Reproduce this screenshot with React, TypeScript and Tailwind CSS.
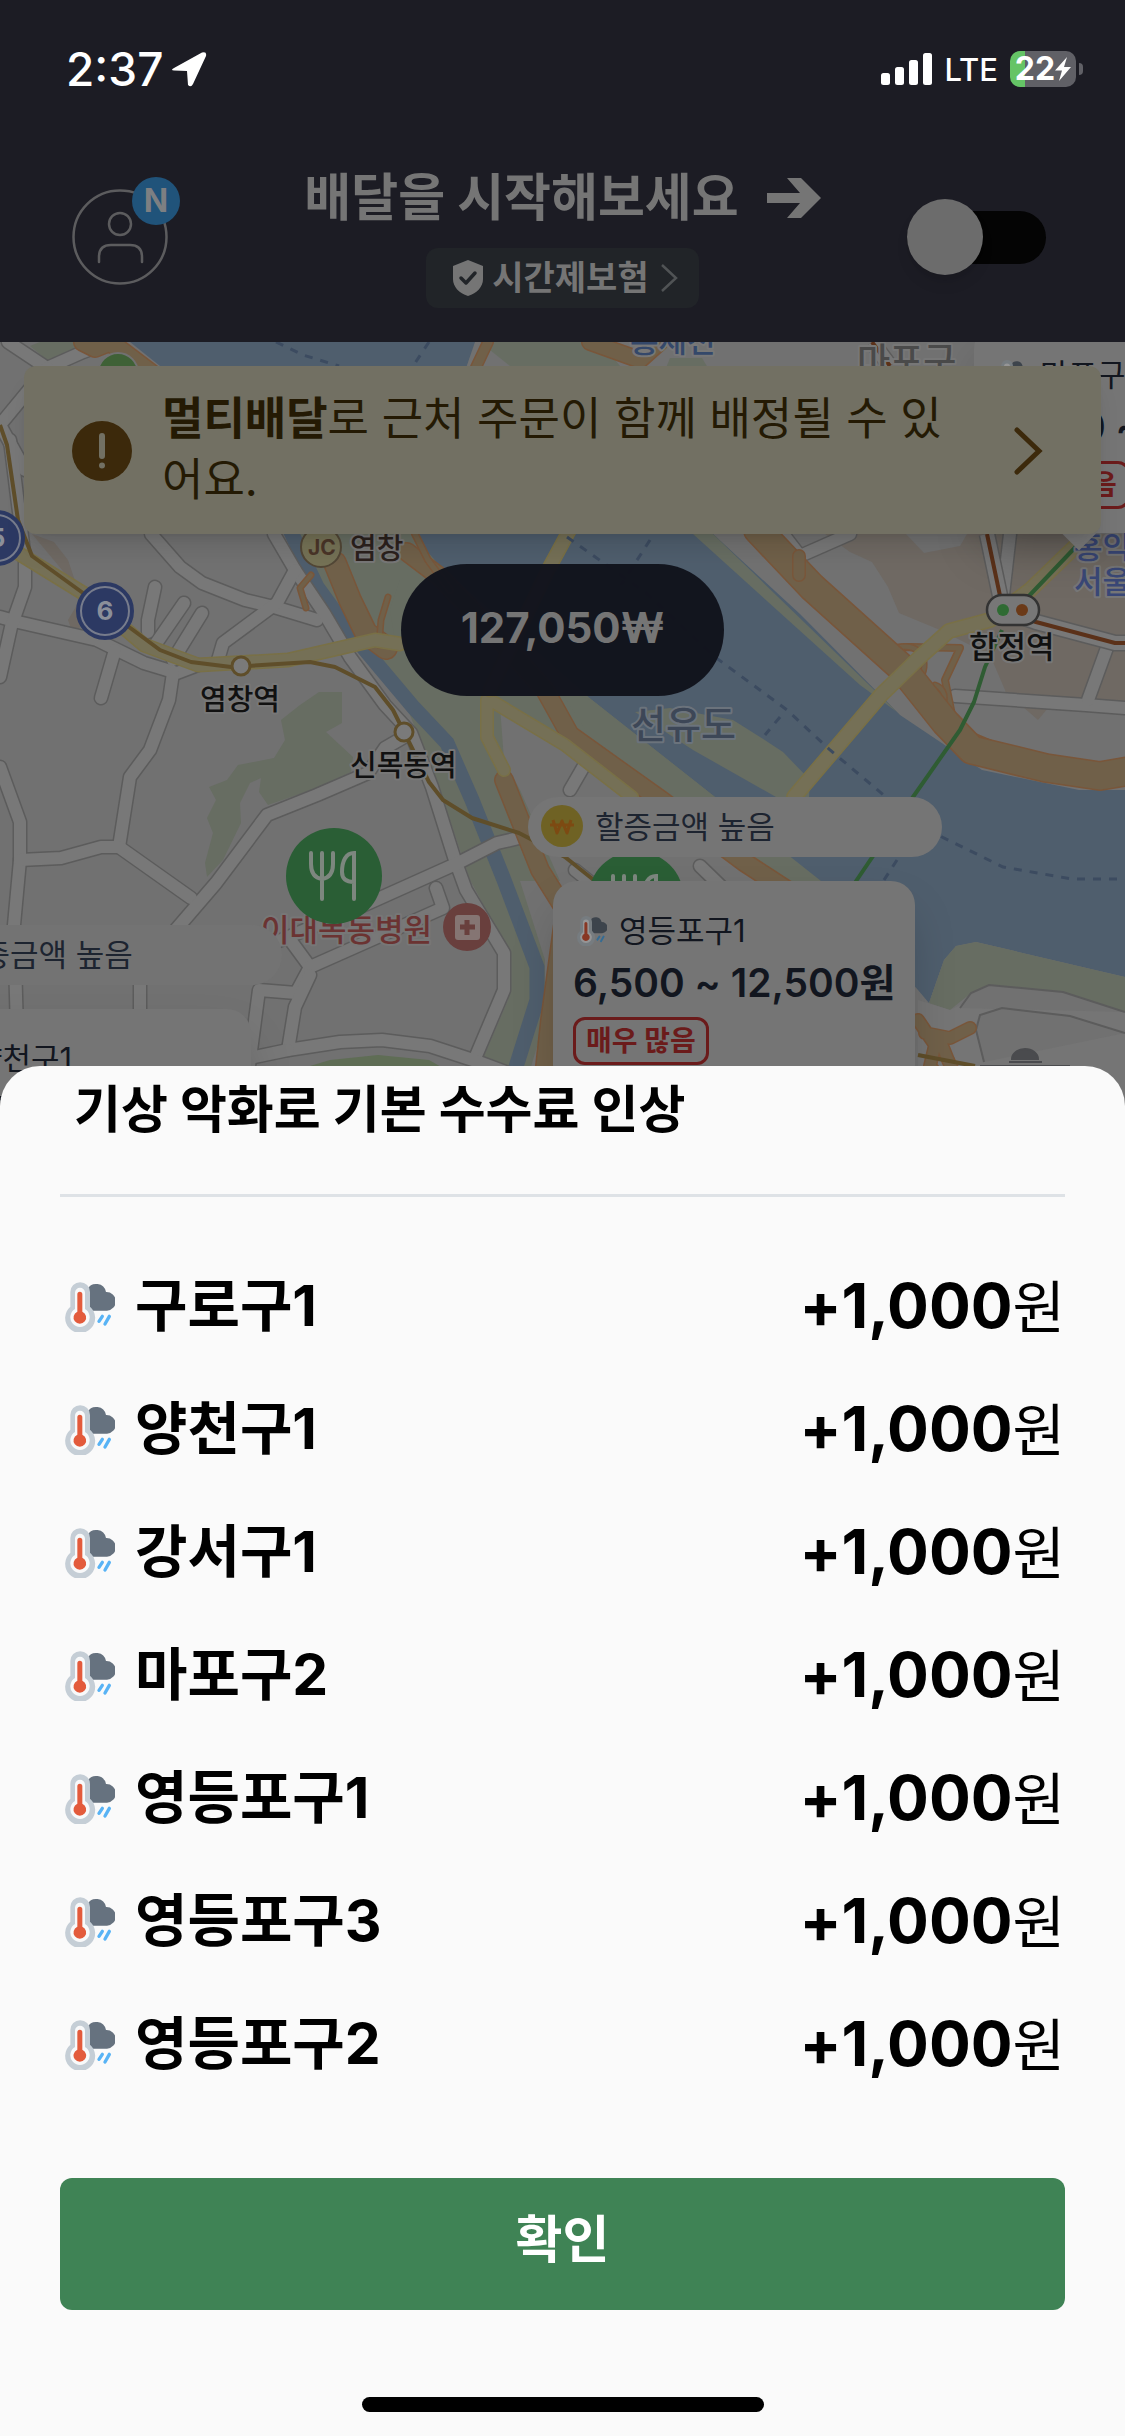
import { useState } from "react";

const SURGE_AREAS = [
  { name: "구로구1", bonus: "+1,000" },
  { name: "양천구1", bonus: "+1,000" },
  { name: "강서구1", bonus: "+1,000" },
  { name: "마포구2", bonus: "+1,000" },
  { name: "영등포구1", bonus: "+1,000" },
  { name: "영등포구3", bonus: "+1,000" },
  { name: "영등포구2", bonus: "+1,000" },
];

// ─── Icons ────────────────────────────────────────────────────────────────────

function WeatherIcon({ className }: { className: string }) {
  return (
    <svg className={className} viewBox="45 36 150 150" fill="none">
      <path
        d="M112 58a30 30 0 0 1 56 8a28 28 0 0 1 3 56h-59z"
        fill="#66727f"
      />
      <path
        d="M61 66a29 29 0 0 1 59 0v44a45 45 0 1 1-59 0z"
        fill="#c5ced6"
      />
      <path d="M75 68a15 15 0 0 1 30 0v49a29 29 0 1 1-30 0z" fill="#f8f9fa" />
      <path
        d="M82 73a7.500 7.500 0 0 1 15 0v52a19 19 0 1 1-15 0z"
        fill="#e35b3c"
      />
      <path
        d="M157 139l-10 15M178 139l-13 23"
        stroke="#58b3f5"
        strokeWidth="10"
        strokeLinecap="round"
      />
    </svg>
  );
}

function ForkKnife() {
  return (
    <g fill="none" stroke="#7d877f" strokeWidth="4" strokeLinecap="round">
      <path d="M-22 -23v11c0 9 4 14 11 15c7 -1 11 -6 11 -15v-11M-11 -23v46" />
      <path d="M21 23v-46c-8 0 -12 8 -12 19c0 7 4 10 12 10" />
    </g>
  );
}

// ─── Status bar ───────────────────────────────────────────────────────────────

function StatusBar() {
  return (
    <div className="flex h-[138px] items-center justify-between pr-[42px] pl-[66px] text-white">
      <div className="flex items-center gap-2">
        <span className="text-[46px] leading-none font-medium">2:37</span>
        <svg className="h-9 w-9" viewBox="0 0 36 36" fill="#fff">
          <path d="M3 17 L31 1.500 Q36 0 35 5 L22 33 Q20 37 17 34 L16 20 L3 19.500 Q-1 19 3 17z" />
        </svg>
      </div>
      <div className="flex items-center gap-3">
        <svg className="h-8 w-[51px]" viewBox="0 0 51 32" fill="#fff">
          <rect x="0" y="20" width="9" height="12" rx="2.500" />
          <rect x="14" y="14" width="9" height="18" rx="2.500" />
          <rect x="28" y="7" width="9" height="25" rx="2.500" />
          <rect x="42" y="0" width="9" height="32" rx="2.500" />
        </svg>
        <span className="text-[31px] leading-none font-medium">LTE</span>
        <div className="flex items-center gap-[3px]">
          <div className="flex h-9 w-[66px] items-center justify-center rounded-[10px] bg-linear-to-r from-[#65c466] from-23% to-[#606066] to-23%">
            <span className="text-[32px] leading-none font-bold">22</span>
            <svg className="h-6 w-4" viewBox="0 0 16 24" fill="#fff">
              <path d="M12 0L0 13.500h7L4 24L16 10H9z" />
            </svg>
          </div>
          <div className="h-3 w-1 rounded-r-full bg-[#606066]" />
        </div>
      </div>
    </div>
  );
}

// ─── Header ───────────────────────────────────────────────────────────────────

function Header() {
  const [online, setOnline] = useState(false);

  return (
    <header className="grid grid-cols-[1fr_auto_1fr] items-center px-[72px] pt-7 pb-[34px]">
      <button className="relative w-24" aria-label="프로필">
        <svg
          className="h-24 w-24"
          viewBox="0 0 96 96"
          fill="none"
          stroke="#5c5c5e"
          strokeWidth="2.500"
          strokeLinecap="round"
        >
          <circle cx="48" cy="48" r="46.500" />
          <circle cx="48" cy="35" r="11" />
          <path d="M27 73v-5q0 -12 12 -12h19q12 0 12 12v5" />
        </svg>
        <span className="absolute -top-3 -right-3 flex h-12 w-12 items-center justify-center rounded-full bg-[#20537a] text-[32px] leading-none font-bold text-[#7d7f82]">
          N
        </span>
      </button>

      <div className="flex flex-col items-center gap-[18px]">
        <div className="flex items-center gap-7">
          <h1 className="text-[51px] leading-[64px] font-bold">
            배달을 시작해보세요
          </h1>
          <svg className="h-10 w-[54px]" viewBox="0 0 54 40" fill="#757575">
            <path d="M0 15h33L20 0h14l20 20l-20 20H20l13 -15H0z" />
          </svg>
        </div>
        <button className="flex h-15 items-center gap-2 rounded-xl bg-[#212428] px-[18px]">
          <svg className="ml-2 h-9 w-8" viewBox="0 0 32 36" fill="none">
            <path
              d="M16 0l15 6v13c0 8 -6 14 -15 17c-9 -3 -15 -9 -15 -17V6z"
              fill="#757575"
            />
            <path
              d="M9 18l5 5l9 -10"
              stroke="#212428"
              strokeWidth="3.500"
              strokeLinecap="round"
              strokeLinejoin="round"
            />
          </svg>
          <span className="text-[34px] leading-none font-bold">시간제보험</span>
          <svg
            className="h-7 w-6"
            viewBox="0 0 24 28"
            fill="none"
            stroke="#505355"
            strokeWidth="2.500"
          >
            <path d="M5 1l14 13l-14 13" />
          </svg>
        </button>
      </div>

      <label className="flex w-[146px] items-center justify-self-end pr-[7px]">
        <input
          type="checkbox"
          className="peer sr-only"
          aria-label="배달 시작"
          checked={online}
          onChange={(e) => setOnline(e.target.checked)}
        />
        <span className="flex h-[53px] w-full items-center rounded-full bg-[#040404] peer-checked:justify-end">
          <span className="h-19 w-19 rounded-full bg-[#6c6c6c] shadow-lg" />
        </span>
      </label>
    </header>
  );
}

// ─── Map ──────────────────────────────────────────────────────────────────────

const STREETS = [
  "M0 617L18 622L97 640L144 663L177 673L198 665",
  "M8 342L47 368L83 352L110 342",
  "M47 368L0 425L25 470",
  "M10 440L25 560V587L11 627L0 677",
  "M151 534L180 567L202 583L245 600L274 607L317 620",
  "M274 534L295 570L324 613L350 657L385 705L411 733L432 787L454 857L466 890L504 953V990L476 1056",
  "M295 570L277 603L223 643L218 660",
  "M155 587L148 620V632",
  "M184 603L155 645",
  "M202 613L173 660",
  "M173 673L169 700L150 750L130 777L119 847",
  "M115 650L101 698",
  "M0 767L20 822V860L14 925L18 1066",
  "M20 860L61 858L101 847L119 847L191 898",
  "M167 940L216 883L267 815L317 795L368 773L385 748L404 737",
  "M519 838L497 843L458 863L360 907L274 943",
  "M288 937L310 967L296 993L259 990L249 1066",
  "M310 967L443 908L436 888",
  "M310 975L295 1007L288 1050L340 1042L382 1040L430 1046L479 1062L540 1085",
  "M288 1050L230 1062",
  "M140 985V1066",
  "M1010 534L1003 595",
  "M783 534L800 556L850 534",
  "M955 696L1086 705L1125 708",
  "M1108 645L1088 700",
  "M570 790L592 752",
  "M575 870L600 890",
  "M700 866L735 900",
];

function Streets({ paths }: { paths: string[] }) {
  return (
    <g fill="none" strokeLinejoin="round" strokeLinecap="round">
      {paths.map((d) => (
        <path key={d} d={d} stroke="#5c5c5c" strokeWidth="15" />
      ))}
      {paths.map((d) => (
        <path key={d} d={d} stroke="#787878" strokeWidth="12" />
      ))}
    </g>
  );
}

function Road({ d, width, kind }: { d: string; width: number; kind: string }) {
  const [edge, fill] =
    kind === "highway" ? ["#79563a", "#706049"] : ["#797046", "#757056"];
  return (
    <g fill="none" strokeLinejoin="round" strokeLinecap="round">
      <path d={d} stroke={edge} strokeWidth={width} />
      <path d={d} stroke={fill} strokeWidth={width - 3} />
    </g>
  );
}

function MapCanvas() {
  return (
    <svg
      className="absolute inset-0 h-full w-full"
      viewBox="0 342 1125 764"
      preserveAspectRatio="xMidYMin slice"
    >
      <rect x="-600" y="342" width="2400" height="900" fill="#717171" />

      {/* built-up areas */}
      <g fill="#6f6963">
        <path d="M825 534L850 552L872 562L888 587L899 613L940 630L990 655L1005 690L1010 706H1125V534z" />
        <path d="M32 534L54 542L68 560L77 587L90 600L75 640L68 620L83 595z" />
        <path d="M1022 706L1038 720L1048 708z" />
      </g>
      <path d="M906 534L924 553L960 546L967 534z" fill="#717171" />

      {/* green banks */}
      <g fill="#676d62">
        <path d="M285 534L420 534L460 580L610 700L740 800L840 881H520L545 960V1020L530 1070H478L508 1000V950L470 880L440 790L404 700L330 600z" />
        <path d="M281 720L300 705L319 692L342 692V723L326 732L353 757L351 772L317 788L268 805L259 792L261 778L250 783L240 803L241 823L223 860L207 877L205 863L213 833L207 818L216 800L209 787L227 780L238 765L274 758L285 740z" />
        <path d="M480 342H600L620 366H510z" />
        <path d="M40 342H90L70 352L47 360L30 346z" />
        <path d="M670 358L702 358L708 368H666z" />
        <path d="M690 534L713 534L905 720L880 705z" />
      </g>

      {/* city blocks between the highways */}
      <path d="M500 706L560 748L632 797L783 881H560L520 790L504 760z" fill="#717171" />
      <path d="M400 580L425 565L450 590L470 640L395 640L390 610z" fill="#676d62" />

      {/* river */}
      <g fill="#4f5e6d">
        <path d="M130 342H475L455 400L713 534L800 614L900 715L982 770L1079 790H1125V977L976 942L956 946L944 960L937 980L929 1003L918 990L821 881L715 797L592 700L440 566L412 534L240 430z" />
      </g>
      <g fill="none" stroke="#4f5e6d" strokeWidth="15">
        <path d="M290 530L317 587L346 627L382 670L414 708L447 743L472 800L504 880L537 967L537 1000L515 1070" />
      </g>
      <g fill="#676d62">
        <path d="M693 534L713 534L897 712L860 685z" />
        <path d="M635 712L670 708L733 720L760 737L783 752L810 780L809 797H776L693 750z" />
        <path d="M929 1003L937 980L944 960L956 946L976 942L1125 977V1012L1063 992L989 985L971 993L950 1010z" />
        <path d="M290 1072L330 1060L378 1055L429 1060L450 1072z" fill="#5f6d55" />
        <path d="M560 690L592 700L715 797H673L590 737z" />
      </g>

      {/* park across the east bank */}
      <path
        d="M918 1000L950 1010L971 1000L989 985L1063 992L1125 1012V1106H918z"
        fill="#757575"
      />
      <path
        d="M984 1062L976 1030L980 1015L1002 1008L1070 1016L1125 1033M960 1008L971 993L989 985L1063 992L1125 1012"
        fill="#717171"
        stroke="#5c5c5c"
        strokeWidth="2"
      />

      <Streets paths={STREETS} />

      {/* highways */}
      <Road kind="highway" width={20} d="M83 342L95 348L110 342L160 380" />
      <Road kind="highway" width={12} d="M488 342L470 380" />
      <Road kind="highway" width={18} d="M590 342L640 360L660 342" />
      <Road kind="highway" width={24} d="M335 563L350 600L366 633L386 648" />
      <Road kind="highway" width={7} d="M311 575L300 588L306 608" />
      <Road kind="highway" width={7} d="M388 597L381 620L379 645" />
      <Road kind="highway" width={20} d="M407 552L440 577L500 640L545 690L570 735L661 800L744 862L790 892" />
      <Road kind="highway" width={8} d="M415 534L428 560L450 590" />
      <Road kind="highway" width={20} d="M504 780L540 870L565 910L550 1020L545 1066" />
      <Road kind="highway" width={8} d="M875 649L910 647L960 648L945 680L952 715L970 735L1010 752" />
      <Road kind="highway" width={7} d="M890 650C915 640 930 655 922 675S900 690 895 668" />
      <Road kind="highway" width={7} d="M935 685C950 690 945 712 935 702" />
      <Road kind="highway" width={30} d="M758 530L812 587L862 632L902 668L945 722L972 750L1046 768L1100 776L1135 770" />
      <Road kind="highway" width={14} d="M918 1020L935 1045L930 1066L950 1090M925 1033L950 1038L970 1028M940 1040L948 1060L955 1075L970 1090M799 556V575" />

      {/* main roads */}
      <Road kind="main" width={15} d="M18 553L83 593L144 645L198 665L288 660L375 640L400 644" />
      <Road kind="main" width={14} d="M504 770L487 737V700L495 703L565 745L632 797" />
      <Road kind="main" width={15} d="M575 520L548 570L490 690" />
      <Road kind="main" width={16} d="M794 797L881 695L920 657L949 631L990 620L1030 590L1086 536" />

      {/* ferry routes */}
      <g fill="none" stroke="#3c4b60" strokeWidth="3" strokeDasharray="8 8">
        <path d="M567 537L646 593L715 657L787 710L830 750L886 797L942 837L1003 867L1072 879H1125" />
        <path d="M650 540L621 585M276 342L303 355L339 366M429 342L413 366M780 717L765 735M897 860L884 880" />
      </g>

      {/* subway lines */}
      <g fill="none" strokeWidth="4" strokeLinejoin="round">
        <path
          d="M0 425L7 445L18 520L32 556L83 593L133 630L160 650L191 662L231 667L310 662L335 667L375 687L393 710L404 732L429 782L443 800L472 818L519 833L565 857L600 885M918 1055L975 1066"
          stroke="#5f4e2a"
        />
        <path d="M1086 536L1028 597M1002 630L985 667L974 702L960 730L913 797L850 890" stroke="#2f5c33" />
      </g>
      <g fill="none" strokeLinejoin="round">
        <path d="M987 534L1003 610L1036 622L1115 643H1135M872 342L890 366" stroke="#5c5c5c" strokeWidth="17" />
        <path d="M987 534L1003 610L1036 622L1115 643H1135M872 342L890 366" stroke="#787878" strokeWidth="14" />
        <path d="M987 534L1003 610L1036 622L1115 643H1135M872 342L890 366" stroke="#5b3119" strokeWidth="4" />
      </g>

      {/* stations and route badges */}
      <g fill="#7a7a7a" stroke="#5f4e2a" strokeWidth="3">
        <circle cx="241" cy="666" r="9" />
        <circle cx="404" cy="732" r="9" />
      </g>
      <rect x="987" y="595" width="52" height="30" rx="15" fill="#777" stroke="#333" strokeWidth="2.500" />
      <circle cx="1003" cy="610" r="6" fill="#2f6b33" />
      <circle cx="1022" cy="610" r="6" fill="#6b3a18" />
      <circle cx="321" cy="547" r="20" fill="#757256" stroke="#524736" strokeWidth="2" />
      <circle cx="118" cy="373" r="20" fill="#3f6136" stroke="#717171" strokeWidth="2" />
      <g fill="#2c3963" stroke="#777c8c" strokeWidth="2">
        <circle cx="105" cy="611" r="28" stroke="#2c3963" />
        <circle cx="105" cy="611" r="24" />
        <circle cx="-3" cy="538" r="27" stroke="#2c3963" />
        <circle cx="-3" cy="538" r="23" />
      </g>

      {/* place names */}
      <g
        fontWeight="500"
        fontSize="29"
        stroke="#777"
        strokeWidth="4"
        strokeLinejoin="round"
        paintOrder="stroke"
        fill="#111"
      >
        <text x="350" y="559" fill="#2b211d">염창</text>
        <text x="200" y="710">염창역</text>
        <text x="350" y="776">신목동역</text>
        <text x="969" y="658" fontSize="31">합정역</text>
        <text x="631" y="738" fontSize="38" fill="#3d4757" stroke="#6b737c">선유도</text>
        <text x="261" y="941" fontSize="31" fill="#6b3332">이대목동병원</text>
        <text x="857" y="374" fontSize="36" fill="#4a4a4a">마포구</text>
        <text x="630" y="352" fontSize="31" fill="#34486a">홍제천</text>
        <text x="1074" y="558" fontSize="31" fill="#3a4877">홍익</text>
        <text x="1074" y="593" fontSize="31" fill="#3a4877">서울</text>
      </g>
      <g fill="#8b8f99" fontWeight="700" fontSize="26" textAnchor="middle">
        <text x="105" y="620">6</text>
        <text x="-3" y="547">5</text>
        <text x="322" y="555" fontSize="21" fill="#4a3528">JC</text>
      </g>

      {/* points of interest */}
      <circle cx="467" cy="927" r="24" fill="#693f3d" />
      <rect x="455" y="915" width="25" height="25" rx="3" fill="#857573" />
      <path d="M467 920v15M460 927h15" stroke="#693f3d" strokeWidth="5" />
      <path d="M1009 1062h33M980 1066h90M1012 1059a13 10 0 0 1 26 0z" fill="#4a4b4e" stroke="#4a4b4e" strokeWidth="2" />
      <circle cx="334" cy="876" r="48" fill="#2a5e35" />
      <g transform="translate(333 876)">
        <ForkKnife />
      </g>
      <circle cx="636" cy="899" r="48" fill="#2a5e35" />
      <g transform="translate(635 899)">
        <ForkKnife />
      </g>
    </svg>
  );
}

function DemandTag({ label }: { label: string }) {
  return (
    <span className="flex h-12 w-fit items-center rounded-xl border-3 border-[#6b1b1b] px-2.5 text-[28px] leading-none font-bold whitespace-nowrap text-[#6b1b1b]">
      {label}
    </span>
  );
}

function AreaCard({ name, price }: { name: string; price: string }) {
  return (
    <div className="flex w-fit flex-col rounded-3xl bg-[#757575] px-5 pt-7 pb-6 text-[#12161f] shadow-2xl">
      <div className="flex items-center gap-3 pl-1">
        <WeatherIcon className="h-[30px] w-[30px] brightness-60" />
        <span className="text-[31px] leading-[44px]">{name}</span>
      </div>
      <p className="mb-2 pt-1 text-[39px] leading-[52px] font-semibold whitespace-nowrap">
        {price}
      </p>
      <DemandTag label="매우 많음" />
    </div>
  );
}

function DeliveryMap() {
  return (
    <main className="relative -mb-10 min-h-[640px] flex-1 overflow-hidden">
      <MapCanvas />

      {/* map pins */}
      <div className="absolute top-[-17px] left-[974px]">
        <div className="absolute -bottom-2.5 left-[87px] h-9 w-9 rotate-45 bg-[#757575]" />
        <AreaCard name="마포구1" price="6,500 ~ 12,500원" />
      </div>
      <div className="absolute top-[583px] -left-[132px] flex h-15 w-[414px] items-center rounded-full bg-[#737373] pb-0.5 pl-[85px] text-[31px] leading-none text-[#1d2430]">
        할증금액 높음
      </div>
      <div className="absolute top-[667px] -left-[92px]">
        <AreaCard name="양천구1" price="6,500 ~ 11,100원" />
      </div>
      <div className="absolute top-[455px] left-[528px] flex h-15 w-[414px] items-center gap-3 rounded-full bg-[#757575] pb-0.5 pl-[13px] text-[31px] leading-none text-[#1d2430]">
        <svg className="h-[42px] w-[42px]" viewBox="0 0 42 42" fill="none">
          <circle cx="21" cy="21" r="21" fill="#6f6224" />
          <path
            d="M12 15l4 13l5 -12l5 12l4 -13M9 20h24"
            stroke="#7d4a12"
            strokeWidth="3"
            strokeLinejoin="round"
          />
        </svg>
        할증금액 높음
      </div>
      <div className="absolute top-[539px] left-[553px]">
        <AreaCard name="영등포구1" price="6,500 ~ 12,500원" />
      </div>

      <div className="relative flex flex-col items-center gap-[30px] px-6 pt-6">
        <button className="flex w-full items-center rounded-xl bg-[#727063] pt-[22px] pr-[56px] pb-6 pl-12 text-left text-[45px] leading-[61px] text-[#241a04] shadow-xl">
          <svg className="mt-1 h-15 w-15 shrink-0" viewBox="0 0 60 60">
            <circle cx="30" cy="30" r="30" fill="#3c290b" />
            <path
              d="M30 15v20M30 44.500v.1"
              stroke="#727063"
              strokeWidth="6"
              strokeLinecap="round"
            />
          </svg>
          <span className="mr-8 ml-[30px] flex-1">
            <b>멀티배달</b>로 근처 주문이 함께 배정될 수 있어요.
          </span>
          <svg
            className="mt-1 h-12 w-8 shrink-0"
            viewBox="0 0 32 48"
            fill="none"
            stroke="#3c290b"
            strokeWidth="5"
            strokeLinecap="round"
          >
            <path d="M4 3l22 21l-22 21" />
          </svg>
        </button>
        <button className="h-[132px] rounded-full bg-[#11131c]/97 px-[60px] pb-1 text-[42px] leading-none font-bold">
          127,050₩
        </button>
      </div>
    </main>
  );
}

// ─── Bottom sheet ─────────────────────────────────────────────────────────────

function SurgeSheet() {
  return (
    <section
      role="dialog"
      aria-labelledby="surge-title"
      className="relative flex flex-col rounded-t-[40px] bg-[#fafafa] px-15 pt-3 pb-6 text-black"
    >
      <h2 id="surge-title" className="pl-[14px] text-[51px] leading-[64px] font-bold">
        기상 악화로 기본 수수료 인상
      </h2>
      <hr className="mt-[52px] border-t-3 border-[#dee2e6]" />
      <ul className="pt-12 pb-[72px]">
        {SURGE_AREAS.map((area) => (
          <li key={area.name} className="flex h-[123px] items-center pl-[5px]">
            <WeatherIcon className="h-[50px] w-[50px]" />
            <span className="ml-5 flex-1 pb-0.5 text-[57px] leading-none font-bold">
              {area.name}
            </span>
            <span className="pb-0.5 text-[57px] leading-none">
              <b className="text-[62px]">{area.bonus}</b>원
            </span>
          </li>
        ))}
      </ul>
      <button className="h-[132px] rounded-xl bg-[#3f8355] pb-2 text-[51px] font-bold text-white">
        확인
      </button>
      <div className="mt-[87px] h-[15px] w-[402px] self-center rounded-full bg-black" />
    </section>
  );
}

export default function App() {
  return (
    <div className="flex min-h-screen flex-col bg-[#1c1c24] font-['Inter','Noto_Sans_CJK_KR',sans-serif] text-[#757575]">
      <StatusBar />
      <Header />
      <DeliveryMap />
      <SurgeSheet />
    </div>
  );
}
